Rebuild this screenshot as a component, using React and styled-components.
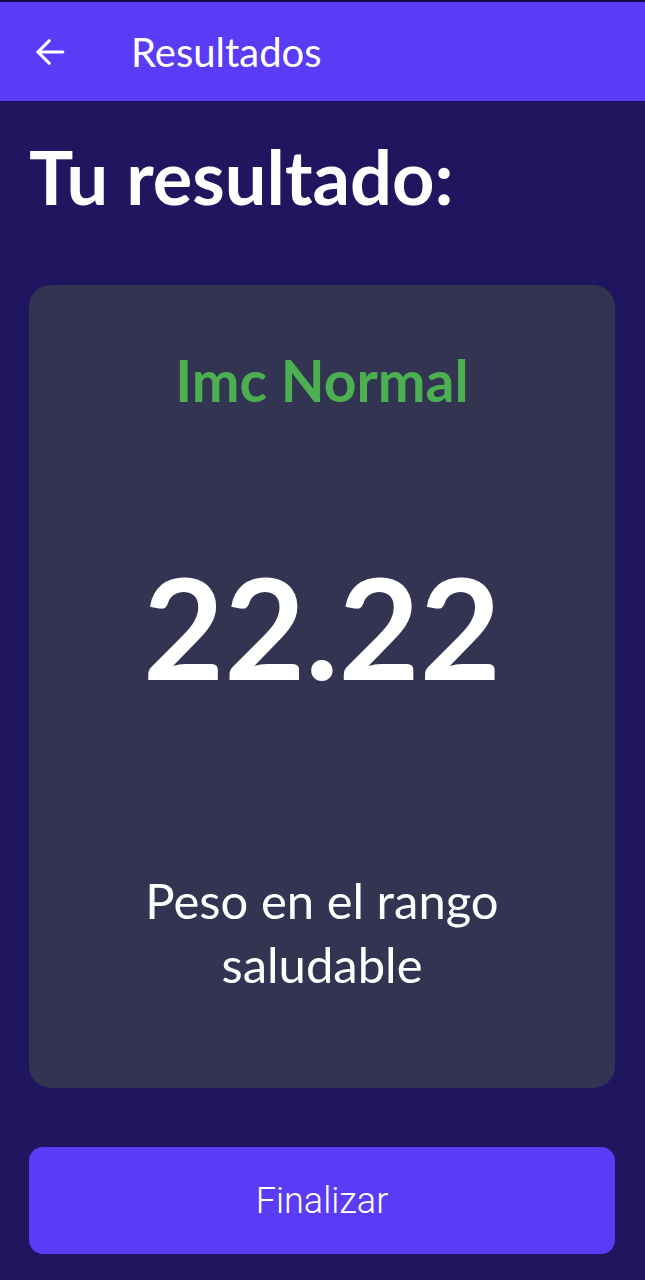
import React from "react";
import styled, { createGlobalStyle } from "styled-components";

const GlobalStyle = createGlobalStyle`
    body {
        margin: 0;
        background-color: #201660;
        font-family: Lato, "Noto Sans", sans-serif;
    }
`;

const Screen = styled.div`
    width: 645px;
    min-height: 1280px;
    box-sizing: border-box;
    border-top: 2px solid #130d45;
    background-color: #201660;
`;

const AppBar = styled.header`
    display: flex;
    align-items: center;
    height: 99px;
    background-color: #5a3cf6;
`;

const BackButton = styled.button`
    display: flex;
    align-items: center;
    justify-content: center;
    width: 100px;
    height: 99px;
    padding: 0;
    border: none;
    background: none;
    cursor: pointer;
`;

const BarTitle = styled.h1`
    margin: 0 0 0 31px;
    font-family: Lato, sans-serif;
    font-weight: 400;
    font-size: 40px;
    color: #ffffff;
`;

const Content = styled.main`
    display: flex;
    flex-direction: column;
    padding: 0 30px 0 29px;
`;

const Heading = styled.h2`
    margin: 39px 0 0 0;
    font-family: Lato, sans-serif;
    font-weight: 700;
    font-size: 74px;
    line-height: 1;
    color: #ffffff;
`;

const Card = styled.section`
    display: flex;
    flex-direction: column;
    align-items: center;
    height: 803px;
    margin-top: 71px;
    box-sizing: border-box;
    padding-top: 67px;
    border-radius: 22px;
    background-color: #323452;
`;

const Status = styled.div`
    font-weight: 700;
    font-size: 57px;
    line-height: 1;
    color: ${props => props.color};
`;

const Value = styled.div`
    margin-top: 147px;
    font-weight: 700;
    font-size: 140px;
    line-height: 1;
    color: #ffffff;
`;

const Description = styled.p`
    margin: 172px 0 0 0;
    width: 380px;
    text-align: center;
    font-weight: 400;
    font-size: 49px;
    line-height: 64px;
    color: #ffffff;
`;

const FinishButton = styled.button`
    height: 107px;
    margin-top: 59px;
    border: none;
    border-radius: 14px;
    background-color: #5a3cf6;
    font-family: Roboto, sans-serif;
    font-weight: 300;
    font-size: 36px;
    color: #ffffff;
    cursor: pointer;
`;

const BackArrow = () => (
    <svg width="36" height="36" viewBox="0 0 24 24" fill="none"
         stroke="#ffffff" strokeWidth="2.1" strokeLinecap="round" strokeLinejoin="round">
        <path d="M20.5 12H4" />
        <path d="M11.5 4.5L4 12l7.5 7.5" />
    </svg>
);

const result = {
    label: "Imc Normal",
    color: "#4caf50",
    value: 22.22,
    text: "Peso en el rango saludable"
};

const App = () => {
    return (
        <Screen>
            <GlobalStyle />
            <AppBar>
                <BackButton aria-label="Volver">
                    <BackArrow />
                </BackButton>
                <BarTitle>Resultados</BarTitle>
            </AppBar>
            <Content>
                <Heading>Tu resultado:</Heading>
                <Card>
                    <Status color={result.color}>{result.label}</Status>
                    <Value>{result.value.toFixed(2)}</Value>
                    <Description>{result.text}</Description>
                </Card>
                <FinishButton>Finalizar</FinishButton>
            </Content>
        </Screen>
    );
};

export default App;
